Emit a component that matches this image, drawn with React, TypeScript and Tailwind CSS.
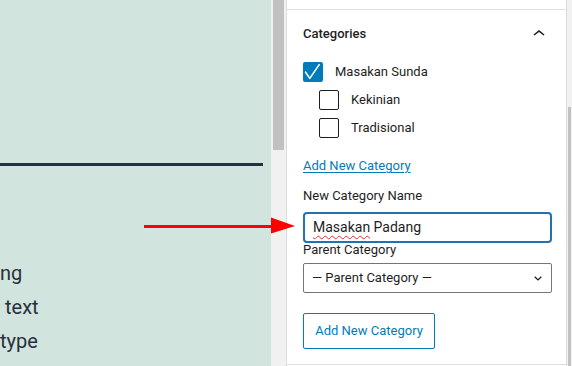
import React from "react";

function Box({ checked }: { checked?: boolean }) {
  if (checked) {
    return (
      <div className="w-[20px] h-[20px] rounded-[2px] bg-[#007cba] flex items-center justify-center shrink-0">
        <svg width="20" height="20" viewBox="0 0 20 20">
          <path d="M2.6 10.2 L6.8 16.4 L16.2 2.6" fill="none" stroke="#fff" strokeWidth="1.6" strokeLinecap="round" strokeLinejoin="round" />
        </svg>
      </div>
    );
  }
  return <div className="w-[20px] h-[20px] rounded-[2px] border border-[#1e1e1e] bg-white shrink-0" />;
}

export default function App() {
  return (
    <div
      className="relative flex w-[572px] h-[366px] overflow-hidden bg-white text-[#1e1e1e]"
      style={{ fontFamily: "Roboto, 'Noto Sans', sans-serif" }}
    >
      {/* editor canvas */}
      <div className="w-[271px] h-full bg-[#d1e4dd] pt-[163px] overflow-hidden shrink-0">
        <div className="h-[3px] w-[263px] bg-[#28303d]" />
        <div className="mt-[90px] text-[20px] leading-[34px] text-[#28303d] whitespace-nowrap">
          <div>ng</div>
          <div className="pl-[5px]">text</div>
          <div>type</div>
        </div>
      </div>

      {/* canvas scrollbar */}
      <div className="w-[15px] h-full bg-[#f1f1f1] shrink-0 pl-[2px]">
        <div className="w-[11px] h-[150px] bg-[#c1c1c1]" />
      </div>

      {/* sidebar */}
      <div className="w-[280px] h-full border-l border-[#dddddd] bg-white shrink-0 flex flex-col">
        <div className="h-[10px] border-b border-[#e0e0e0] shrink-0" />
        <div className="pl-4 pr-[14px] pb-[15px] border-b border-[#e0e0e0]">
          <div className="h-[47px] flex items-center justify-between">
            <span className="text-[13px] font-medium leading-[20px] pt-[1px]">Categories</span>
            <svg width="24" height="24" viewBox="0 0 24 24" className="mr-[1px]">
              <path d="M6.5 12.4L12 8l5.5 4.4-.9 1.2L12 10l-4.5 3.6-1-1.2z" fill="#1e1e1e" />
            </svg>
          </div>

          <div className="h-[28px] flex items-center pt-[1px]">
            <Box checked />
            <span className="ml-[12px] text-[13px] pt-[1px]">Masakan Sunda</span>
          </div>
          <div className="h-[28px] flex items-center pl-4 pt-[1px]">
            <Box />
            <span className="ml-[12px] text-[13px] pt-[1px]">Kekinian</span>
          </div>
          <div className="h-[28px] flex items-center pl-4 pt-[1px]">
            <Box />
            <span className="ml-[12px] text-[13px] pt-[1px]">Tradisional</span>
          </div>

          <div className="mt-[15px] leading-[20px] text-[13px] text-[#007cba] underline underline-offset-2">
            Add New Category
          </div>
          <div className="mt-[10px] leading-[20px] text-[13px]">New Category Name</div>
          <div className="mt-[6px] h-[31px] border-2 border-[#2271b1] rounded-[4px] flex items-center pl-[8px] text-[14px]">
            <span className="underline decoration-wavy decoration-[#e0312b] decoration-1 underline-offset-[3px]">Masakan</span>
            <span>&nbsp;Padang</span>
          </div>
          <div className="leading-[14px] text-[13px]">Parent Category</div>
          <div className="mt-[6px] h-[30px] border border-[#757575] rounded-[2px] flex items-center justify-between pl-[8px] pr-[9px] text-[13px]">
            <span>— Parent Category —</span>
            <svg width="8" height="5" viewBox="0 0 8 5">
              <polyline points="0.7,0.7 4,3.9 7.3,0.7" fill="none" stroke="#1e1e1e" strokeWidth="1.3" />
            </svg>
          </div>
          <div className="mt-[20px] h-[36px] w-[132px] border border-[#007cba] rounded-[2px] flex items-center justify-center text-[13px] text-[#007cba]">
            Add New Category
          </div>
        </div>
      </div>

      {/* sidebar scrollbar */}
      <div className="w-[6px] h-full border-l border-[#dddddd] bg-[#f1f1f1] shrink-0 pl-[1px] pt-[107px]">
        <div className="w-[3px] h-full bg-[#c1c1c1]" />
      </div>

      {/* red annotation arrow */}
      <svg className="absolute left-[140px] top-[212px]" width="160" height="28" viewBox="0 0 160 28">
        <rect x="4" y="13" width="128" height="3" fill="#ff0000" />
        <polygon points="131,5.5 155,14 131,21.5" fill="#ff0000" />
      </svg>
    </div>
  );
}
